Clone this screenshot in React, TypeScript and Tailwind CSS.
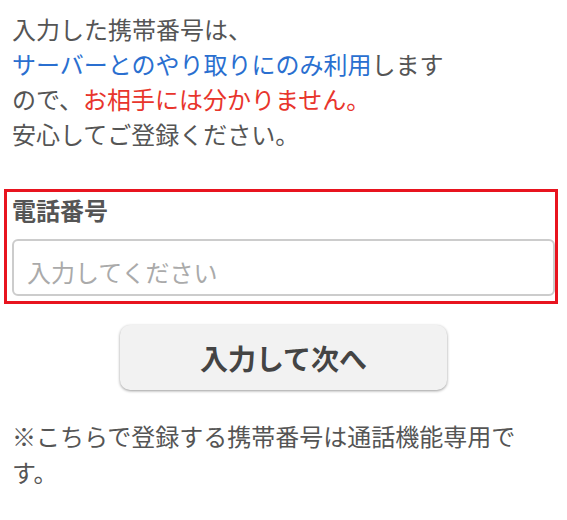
import React from "react";

export default function App() {
  return (
    <div
      className="w-[567px] h-[520px] bg-white text-[#555555] overflow-hidden"
      style={{ fontFamily: '"Noto Sans CJK JP", "Noto Sans", sans-serif' }}
    >
      <p className="pl-3 pt-[11px] text-[24px] leading-[35px]">
        入力した携帯番号は、
        <br />
        <span className="text-[#2a6fd0]">サーバーとのやり取りにのみ利用</span>します
        <br />
        ので、<span className="text-[#e8352c]">お相手には分かりません。</span>
        <br />
        安心してご登録ください。
      </p>

      <div className="ml-[4px] mt-[38px] w-[554px] border-[3px] border-[#e8141f] pl-[5px] pb-[5px]">
        <label className="block text-[24px] leading-[35px] font-bold text-[#555555]">
          電話番号
        </label>
        <input
          type="text"
          placeholder="入力してください"
          className="mt-3 block w-full h-[57px] rounded-[6px] border-2 border-[#cccccc] bg-white px-[13px] pt-[8px] text-[24px] text-[#555555] outline-none placeholder:text-[#aaaaaa]"
          style={{ fontFamily: '"Noto Sans CJK JP", "Noto Sans", sans-serif' }}
        />
      </div>

      <div className="flex justify-center mt-[21px]">
        <button
          type="button"
          className="w-[327px] h-[65px] rounded-[10px] bg-[#f2f2f2] text-[28px] font-bold text-[#444444] shadow-[0_1px_3px_rgba(0,0,0,0.4)]"
          style={{ fontFamily: '"Noto Sans CJK JP", "Noto Sans", sans-serif' }}
        >
          入力して次へ
        </button>
      </div>

      <p className="pl-3 mt-[28px] w-[540px] text-[24px] leading-[36px]">
        ※こちらで登録する携帯番号は通話機能専用です。
      </p>
    </div>
  );
}
